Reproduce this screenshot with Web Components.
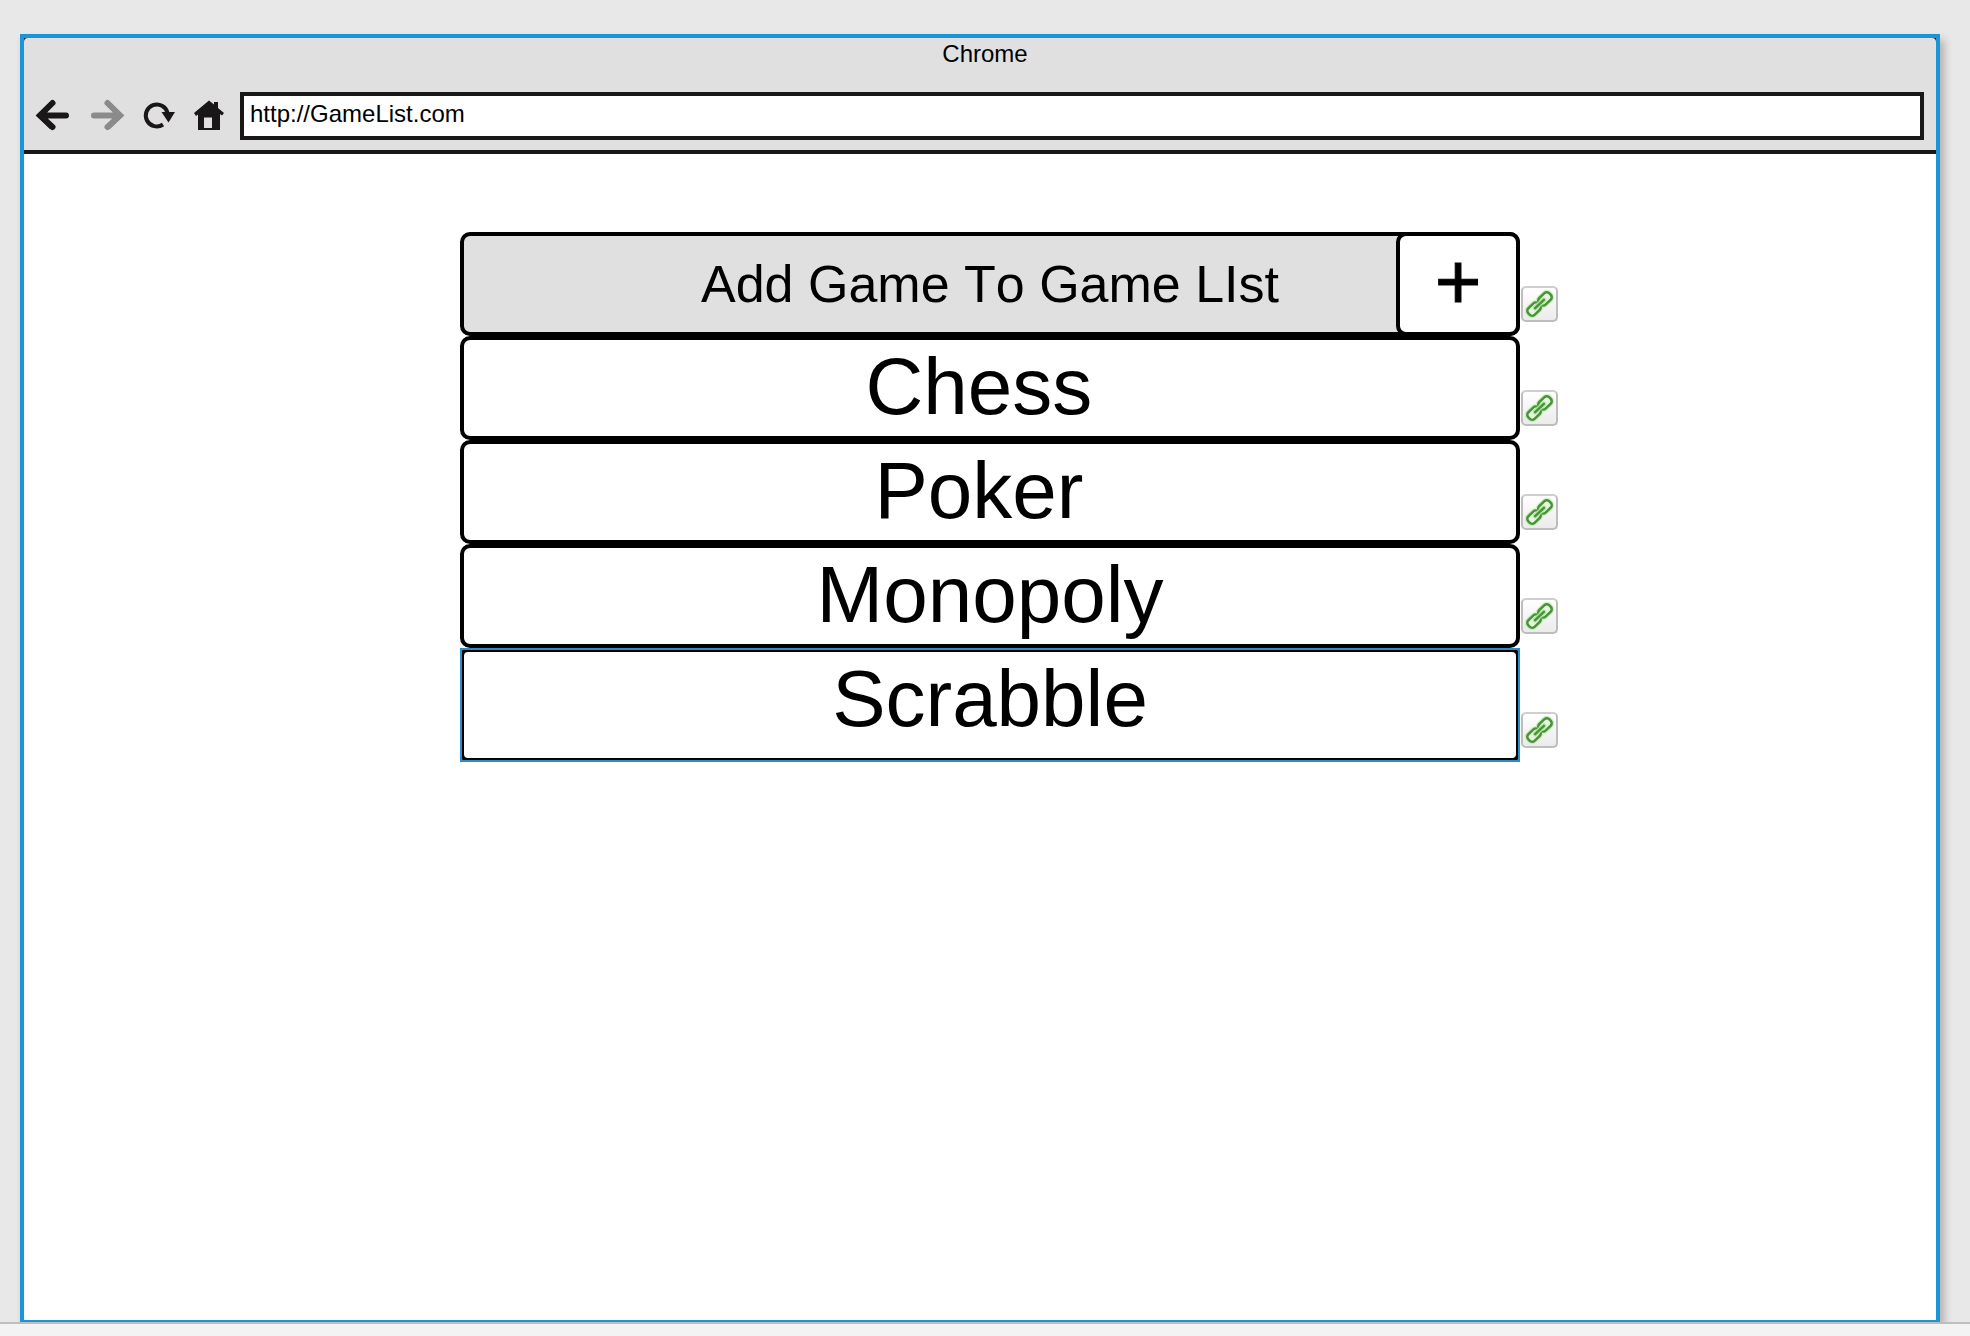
<!DOCTYPE html>
<html lang="en">
<head>
<meta charset="utf-8">
<title>Game List</title>
<style>
  html, body { margin: 0; height: 100%; }
  body { background: #e8e8e8; color: #000; font-family: "Liberation Sans", Arial, sans-serif; font-kerning: none; }
</style>
</head>
<body>
<mock-canvas>
  <browser-frame heading="Chrome" url="http://GameList.com">
    <game-list>
      <add-row>Add Game To Game LIst</add-row>
      <game-row>Chess </game-row>
      <game-row>Poker </game-row>
      <game-row>Monopoly</game-row>
      <game-row selected>Scrabble</game-row>
    </game-list>
  </browser-frame>
</mock-canvas>
<script>
  const define = (name, markup, setup) => customElements.define(name, class extends HTMLElement {
    constructor() {
      super();
      this.attachShadow({ mode: "open" }).innerHTML = markup;
    }
    connectedCallback() { if (setup) setup(this, this.shadowRoot); }
  });

  define("mock-canvas", `
    <style>
      :host { display: flex; flex-direction: column; height: 100vh; }
      main { flex: 1; min-height: 0; display: flex; flex-direction: column; box-sizing: border-box; padding: 34px 30px 0 20px; overflow: hidden; }
      footer { box-sizing: border-box; height: 14px; border-top: 2px solid #bebebe; background: #f3f3f3; }
    </style>
    <main><slot></slot></main>
    <footer></footer>`);

  define("nav-icon", `
    <style>
      :host { display: block; width: 34px; height: 32px; }
      button { display: block; width: 100%; height: 100%; margin: 0; padding: 0; border: 0; background: none; color: #1a1718; }
      button:disabled { color: #8b8b8b; }
      svg { display: block; width: 34px; height: 32px; overflow: visible; }
    </style>
    <button type="button"></button>`,
    (host, root) => {
      const arrow = `<path d="M17.500 3 5 15.500 17.500 27M6 15.500h25" fill="none" stroke="currentColor" stroke-width="6" stroke-linecap="round"/><path d="M1 15.500 15 2l2 4-6 7v5l6 7-2 4z" fill="currentColor"/>`;
      const shapes = {
        back: arrow,
        forward: `<g transform="matrix(-1 0 0 1 38 0)">${arrow}</g>`,
        reload: `<g transform="translate(3 -1)"><path d="M21 25.500A11 11 0 1 1 25.500 14" fill="none" stroke="currentColor" stroke-width="4"/><path d="M19.500 13H33l-6.500 10.500z" fill="currentColor"/></g>`,
        home: `<path transform="translate(1 -1)" fill="currentColor" fill-rule="evenodd" d="M17 1.500 22 5.500V3h4v6l6 5-2 2.500-2-1.500V31H6V15.500L4 17l-2-3zM12 18.500h8V29h-8z"/>`
      };
      const kind = host.getAttribute("kind");
      const button = root.querySelector("button");
      button.setAttribute("aria-label", kind);
      button.disabled = host.hasAttribute("disabled");
      button.innerHTML = `<svg viewBox="0 0 34 32" aria-hidden="true">${shapes[kind]}</svg>`;
    });

  define("browser-frame", `
    <style>
      :host { flex: 1; display: flex; flex-direction: column; border: 4px solid #1a96d8; border-bottom-width: 2px; background: #1a1718; box-shadow: 4px 6px 8px rgba(60, 40, 30, .3); }
      header { background: #e0e0e0; border-radius: 4px 4px 0 0; border-bottom: 4px solid #1a1718; height: 112px; }
      h1 { margin: 0; padding-left: 10px; font-size: 24px; line-height: 32px; font-weight: 400; text-align: center; }
      nav { display: flex; align-items: center; padding: 22px 12px 0 11px; }
      .icons { display: flex; gap: 18px; }
      form { flex: 1; margin-left: 15px; }
      input { display: block; width: 100%; height: 48px; box-sizing: border-box; border: 4px solid #1a1718; border-radius: 0; margin: 0; padding: 0 6px 4px; background: #fff; color: #000; font: 24px "Liberation Sans", Arial, sans-serif; outline: 0; }
      section { flex: 1; background: #fff; }
    </style>
    <header>
      <h1></h1>
      <nav>
        <div class="icons">
          <nav-icon kind="back"></nav-icon>
          <nav-icon kind="forward" disabled></nav-icon>
          <nav-icon kind="reload"></nav-icon>
          <nav-icon kind="home"></nav-icon>
        </div>
        <form><input type="text" aria-label="Address"></form>
      </nav>
    </header>
    <section><slot></slot></section>`,
    (host, root) => {
      root.querySelector("h1").textContent = host.getAttribute("heading");
      root.querySelector("input").value = host.getAttribute("url");
    });

  define("link-badge", `
    <style>
      :host { display: block; }
      a { display: flex; align-items: center; justify-content: center; box-sizing: border-box; width: 37px; height: 36px; border: 2px solid #bdbdbd; border-top-color: #cfcfcf; border-radius: 5px; background: linear-gradient(#fff, #ebebeb); }
      svg { display: block; width: 29px; height: 28px; }
    </style>
    <a href="#" aria-label="Open link">
      <svg viewBox="-14.500 -14 29 28" fill="none" aria-hidden="true">
        <g transform="rotate(-43)">
          <g stroke="#c8efbc" stroke-width="5"><rect x="-14.500" y="-4.500" width="14" height="9" rx="3.500"/><rect x=".5" y="-4.500" width="14" height="9" rx="3.500"/></g>
          <g stroke="#4c923c" stroke-width="2.500" fill="#e4f7dd"><rect x="-14.500" y="-4.500" width="14" height="9" rx="3.500"/><rect x=".5" y="-4.500" width="14" height="9" rx="3.500"/></g>
          <path d="M-6 0H6" stroke="#b4e8a2" stroke-width="5" stroke-linecap="round"/>
          <path d="M-6 0H6" stroke="#4c923c" stroke-width="2.500" stroke-linecap="round"/>
        </g>
      </svg>
    </a>`);

  define("game-list", `
    <style>
      :host { display: block; padding: 78px 0 0 58px; }
      div { display: flex; flex-direction: column; max-width: 1098px; margin: 0 auto; }
    </style>
    <div role="list"><slot></slot></div>`);

  const rowStyle = `
      :host { display: flex; align-items: flex-end; gap: 1px; }
      .box { flex: 1; min-width: 0; box-sizing: border-box; border: 4px solid #000; border-radius: 10px; padding: 0 0 2px; background: #fff; line-height: 94px; text-align: center; white-space: pre; font-size: 80px; }
      link-badge { padding-bottom: 14px; }`;

  define("game-row", `
    <style>${rowStyle}
      :host([selected]) .ring { outline: 2px solid #2a8cc8; outline-offset: -2px; }
      :host([selected]) .box { height: 114px; border-radius: 8px; }
      .ring { flex: 1; min-width: 0; }
    </style>
    <div class="ring"><div class="box"><slot></slot></div></div>
    <link-badge></link-badge>`,
    host => host.setAttribute("role", "listitem"));

  define("add-row", `
    <style>${rowStyle}
      .bar { flex: 1; display: grid; grid-template-columns: 1fr 124px; }
      .title { grid-area: 1 / 1 / 2 / 3; padding: 0; background: #e0e0e0; font-size: 52px; line-height: 96px; }
      button.box { grid-area: 1 / 2; margin: 0; padding: 0 0 4px; color: #000; font-family: inherit; line-height: 92px; -webkit-text-stroke: 1px #000; }
    </style>
    <div class="bar">
      <div class="box title"><slot></slot></div>
      <button class="box" type="button" aria-label="Add game">+</button>
    </div>
    <link-badge></link-badge>`,
    host => host.setAttribute("role", "listitem"));
</script>
</body>
</html>
